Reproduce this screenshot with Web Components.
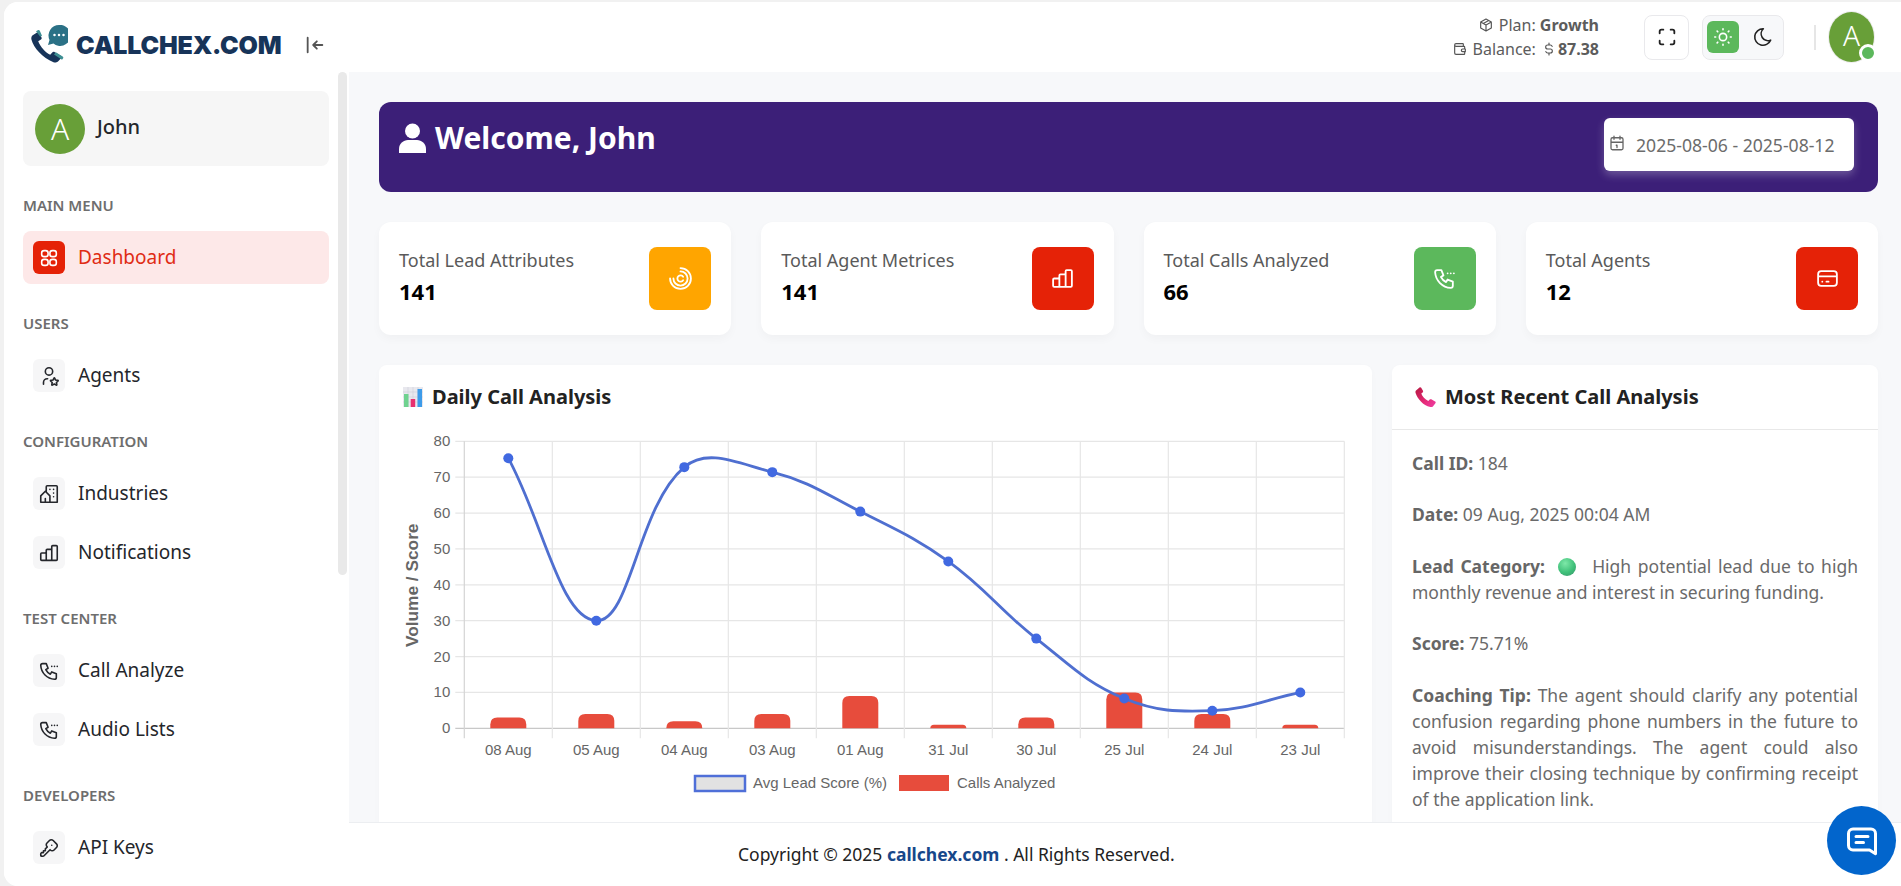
<!DOCTYPE html>
<html lang="en"><head><meta charset="utf-8"><title>Callchex Dashboard</title>
<style>
html,body{margin:0;height:886px;overflow:hidden;background:#f1f1f1}
body{font-family:"Noto Sans","Liberation Sans",sans-serif}
</style></head><body>
<cx-app></cx-app>
<script>
const ICONS={
collapse:'<path d="M10 12h10M10 12l4 4M10 12l4-4M4 4v16"/>',
grid:'<rect x="4" y="4" width="7" height="6.5" rx="2.600"/><rect x="13" y="4" width="7" height="6.5" rx="2.600"/><rect x="4" y="13.5" width="7" height="6.5" rx="2.600"/><rect x="13" y="13.5" width="7" height="6.5" rx="2.600"/>',
userstar:'<path d="M8 7a4 4 0 1 0 8 0a4 4 0 0 0-8 0M6 21v-2a4 4 0 0 1 4-4h.5M17.8 20.817l-2.172 1.138a.392.392 0 0 1-.568-.41l.415-2.411l-1.757-1.707a.389.389 0 0 1 .217-.665l2.428-.352l1.086-2.193a.392.392 0 0 1 .702 0l1.086 2.193l2.428.352a.39.39 0 0 1 .217.665l-1.757 1.707l.414 2.41a.39.39 0 0 1-.567.411z"/>',
building:'<path d="M8 9l5 5v7h-5v-4m0 4h-5v-7l5-5m1 1v-6a1 1 0 0 1 1-1h10a1 1 0 0 1 1 1v17h-8M13 7v.01M17 7v.01M17 11v.01M17 15v.01"/>',
bars:'<path d="M3 13a1 1 0 0 1 1-1h4a1 1 0 0 1 1 1v6a1 1 0 0 1-1 1h-4a1 1 0 0 1-1-1zM9 9a1 1 0 0 1 1-1h4a1 1 0 0 1 1 1v10a1 1 0 0 1-1 1h-4a1 1 0 0 1-1-1zM15 5a1 1 0 0 1 1-1h4a1 1 0 0 1 1 1v14a1 1 0 0 1-1 1h-4a1 1 0 0 1-1-1zM4 20h14"/>',
phonecall:'<path d="M5 4h4l2 5l-2.5 1.5a11 11 0 0 0 5 5l1.5-2.5l5 2v4a2 2 0 0 1-2 2a16 16 0 0 1-15-15a2 2 0 0 1 2-2M15 7v.01M18 7v.01M21 7v.01"/>',
key:'<path d="M16.555 3.843l3.602 3.602a2.877 2.877 0 0 1 0 4.069l-2.643 2.643a2.877 2.877 0 0 1-4.069 0l-.301-.301l-6.558 6.558a2 2 0 0 1-1.239.578l-.175.008h-1.172a1 1 0 0 1-.993-.883l-.007-.117v-1.172a2 2 0 0 1 .467-1.284l.119-.13l.414-.414h2v-2h2v-2l2.144-2.144l-.301-.301a2.877 2.877 0 0 1 0-4.069l2.643-2.643a2.877 2.877 0 0 1 4.069 0zM15 9h.01"/>',
box:'<path d="M12 3l8 4.5v9l-8 4.5l-8-4.5v-9l8-4.5M12 12l8-4.5M12 12v9M12 12l-8-4.5M16 5.25l-8 4.5"/>',
wallet:'<path d="M17 8v-3a1 1 0 0 0-1-1h-10a2 2 0 0 0 0 4h12a1 1 0 0 1 1 1v3m0 4v3a1 1 0 0 1-1 1h-12a2 2 0 0 1-2-2v-12M20 12v4h-4a2 2 0 0 1 0-4h4"/>',
dollar:'<path d="M16.7 8a3 3 0 0 0-2.7-2h-4a3 3 0 0 0 0 6h4a3 3 0 0 1 0 6h-4a3 3 0 0 1-2.7-2M12 3v3m0 12v3"/>',
max:'<path d="M4 8v-2a2 2 0 0 1 2-2h2M4 16v2a2 2 0 0 0 2 2h2M16 4h2a2 2 0 0 1 2 2v2M16 20h2a2 2 0 0 0 2-2v-2"/>',
sun:'<path d="M8 12a4 4 0 1 0 8 0a4 4 0 1 0-8 0M3 12h1m8-9v1m8 8h1m-9 8v1m-6.4-15.4l.7.7m12.1-.7l-.7.7m0 11.4l.7.7m-12.1-.7l-.7.7"/>',
moon:'<path d="M12 3c.132 0 .263 0 .393 0a7.5 7.5 0 0 0 7.92 12.446a9 9 0 1 1-8.313-12.454z"/>',
cal:'<path d="M4 7a2 2 0 0 1 2-2h12a2 2 0 0 1 2 2v12a2 2 0 0 1-2 2h-12a2 2 0 0 1-2-2zM16 3v4M8 3v4M4 11h16M11 15h1M12 15v3"/>',
spiral:'<path d="M2 12A10 10 0 1 0 12 2M5.200 12A6.800 6.800 0 1 0 12 5.200M14.500 10.300A3 3 0 1 0 14.500 13.700"/>',
card:'<path d="M3 8a3 3 0 0 1 3-3h12a3 3 0 0 1 3 3v8a3 3 0 0 1-3 3h-12a3 3 0 0 1-3-3zM3 10h18M7 15h.01M11 15h2"/>',
chat:'<path d="M8 9h8M8 13h5M6 4a3 3 0 0 0-3 3v8a3 3 0 0 0 3 3h11l4 2.500v-13.500a3 3 0 0 0-3-3z"/>'
};
const ico=(n,s=22,w=1.75,c='currentColor')=>`<svg width="${s}" height="${s}" viewBox="0 0 24 24" fill="none" stroke="${c}" stroke-width="${w}" stroke-linecap="round" stroke-linejoin="round" aria-hidden="true">${ICONS[n]}</svg>`;
const def=(name,css,html)=>customElements.define(name,class extends HTMLElement{
  constructor(){super();this.attachShadow({mode:'open'})}
  connectedCallback(){const r=this.shadowRoot;r.innerHTML=`<style>${css}</style>`+(typeof html==='function'?html(this):html)}
});

def('cx-avatar',`:host{display:flex;align-items:center;justify-content:center;flex:none;position:relative;background:#689f38;color:#fff;border-radius:50%;font-family:"Noto Sans",sans-serif;font-weight:300}
:host([online]){box-sizing:border-box;padding-bottom:5px}
.dot{position:absolute;right:-3px;bottom:0;width:12px;height:12px;border-radius:50%;background:#5cb85c;border:3px solid #fff}`,
 h=>`A${h.hasAttribute('online')?'<span class="dot"></span>':''}`);

def('cx-logo',`:host{display:flex;align-items:center;gap:8px;margin-top:17px}
span{font:900 25px/1 Inter,"Liberation Sans",sans-serif;color:#173459;letter-spacing:-.2px}
svg{display:block}`,
`<svg width="38" height="42" viewBox="0 0 38 42"><path d="M7.500 7.200l-4.800 3c-1.300 1-1.700 2.600-1.200 4.500 2 8 11 18 22 22.500 2 .6 3.600.2 5-1.200l2.800-3c.6-.7.4-1.600-.3-2.100l-6.500-3.900c-.8-.4-1.500-.3-2 .3l-2.300 2.500c-5-2.400-9.500-7.500-12-13.500l2.800-1.700c.7-.5.9-1.200.5-2l-2-4.400z" fill="#173459"/><path d="M6 6.300l1.800-1.100c.8-.4 1.600-.2 2 .6l2.200 4.900-1.800 1zM24 29.500l1.800-2.200 6.900 4.200c.7.500.9 1.400.3 2.100l-1 1.200z" fill="#3f8f93"/><path d="M29 0a10.500 10.500 0 0 0-9.500 15l-1.500 5 5.500-1.500A10.500 10.500 0 1 0 29 0z" fill="#2b7186"/><g fill="#fff"><circle cx="24.500" cy="10" r="1.250"/><circle cx="29" cy="10" r="1.250"/><circle cx="33.500" cy="10" r="1.250"/></g></svg><span>CALLCHEX.COM</span>`);

def('cx-header',`:host{display:flex;align-items:center;height:70px;background:#fff;padding:0 27px 0 26px;box-sizing:border-box;color:#5c5c5c;font-size:16px;position:relative}
.col{margin:16px 0 0 22px;color:#222;display:flex}
.sp{flex:1}
.info{display:flex;flex-direction:column;align-items:flex-end;line-height:24px;margin-right:45px}
.info div{display:flex;align-items:center;gap:5px;white-space:nowrap}
b{font-weight:700}
svg{display:block;color:#555}
.btn{width:45px;height:45px;box-sizing:border-box;border:1px solid #e9e9ec;border-radius:8px;display:flex;align-items:center;justify-content:center;color:#222;background:#fff}
.btn svg{color:#222}
.tog{display:flex;align-items:center;height:45px;width:82px;box-sizing:border-box;border:1px solid #e9e9ec;border-radius:8px;background:#f7f8fa;margin-left:13px;padding:0 4px;gap:8px}
.tog i{display:flex;width:32px;height:32px;border-radius:6px;align-items:center;justify-content:center}
.tog i.on{background:#5cb85c}
.tog i.on svg{color:#fff}.tog i svg{color:#222}
.div{width:2px;height:25px;background:#e6e6e6;margin:0 13px 0 30px}
cx-avatar{width:45px;height:50px;font-size:28px;box-shadow:0 0 0 1px #eee}`,
`<cx-logo></cx-logo><span class="col">${ico('collapse',22,2)}</span><span class="sp"></span>
<div class="info"><div>${ico('box',16)}<span>Plan: <b>Growth</b></span></div>
<div>${ico('wallet',16)}<span>Balance:</span>${ico('dollar',16)}<b style="margin-left:-4px">87.38</b></div></div>
<div class="btn">${ico('max',22,2)}</div>
<div class="tog"><i class="on">${ico('sun',22,1.75)}</i><i>${ico('moon',22,1.75)}</i></div>
<div class="div"></div><cx-avatar online></cx-avatar>`);

def('cx-nav-label',`:host{display:block;height:20px;line-height:20px;margin:29px 0 16px;font-size:15px;font-weight:600;color:#6e6e6e;white-space:nowrap}`,`<slot></slot>`);
def('cx-nav-item',`:host{display:flex;align-items:center;gap:13px;height:53px;box-sizing:border-box;padding:0 0 2px 10px;border-radius:8px;font-size:19px;color:#24262b;margin-bottom:6px}
:host([active]){background:#fde8e8;color:#e02c14}
i{display:flex;align-items:center;justify-content:center;width:32px;height:33px;margin-top:2px;border-radius:6px;background:#f6f6f7;color:#24262b}
:host([active]) i{background:#e52207;color:#fff}
svg{display:block}`,
h=>`<i>${ico(h.getAttribute('icon'),22,1.75)}</i><slot></slot>`);
def('cx-sidebar',`:host{display:block;width:345px;background:#fff;position:relative;padding:19px 20px 0 19px;box-sizing:border-box;overflow:hidden}
.u{display:flex;align-items:center;gap:12px;height:75px;padding-left:12px;background:#f6f6f6;border-radius:8px;font-size:20px;font-weight:500;color:#24262b}
.u span{margin-top:-4px}
cx-avatar{width:50px;height:50px;font-size:30px}
.thumb{position:absolute;left:334px;top:0;width:9px;height:503px;border-radius:5px;background:#e9e9e9}`,
`<div class="u"><cx-avatar></cx-avatar><span>John</span></div><div class="thumb"></div><slot></slot>`);

def('cx-welcome',`:host{display:flex;justify-content:space-between;height:90px;box-sizing:border-box;background:#3c1f78;border-radius:12px;padding:0 24px 0 20px;color:#fff}
h1{margin:0;padding-top:21px;font-size:30px;font-weight:700;display:flex;align-items:center;gap:9px;line-height:1;height:30px}
svg{display:block}
.d{display:flex;align-items:center;width:250px;height:53px;margin-top:16px;box-sizing:border-box;background:#fff;border-radius:6px;box-shadow:0 4px 8px rgba(255,255,255,.25);color:#6c6c6c;font-size:17.600px;padding-left:4px;gap:10px}
.d svg{margin-top:-4px;color:#666}`,
`<h1><svg width="27" height="30" viewBox="0 0 27 30" fill="#fff"><circle cx="13.500" cy="8" r="7.500"/><path d="M0 30v-4c0-5.500 4.500-9 9-9h9c4.500 0 9 3.500 9 9v4z"/></svg>Welcome, John</h1>
<div class="d">${ico('cal',18,1.75)}<span>2025-08-06 - 2025-08-12</span></div>`);

def('cx-stat',`:host{display:flex;align-items:center;justify-content:space-between;height:113px;box-sizing:border-box;background:#fff;border-radius:12px;box-shadow:0 4px 10px rgba(0,0,0,.03);padding:0 20px 0 20px}
.l{font-size:18px;color:#5a5a5a;line-height:24px;white-space:nowrap}
.n{font-size:22px;font-weight:700;color:#000;line-height:30px;margin-top:4px}
.t{margin-top:-3px}
i{display:flex;align-items:center;justify-content:center;width:62px;height:63px;border-radius:8px;color:#fff;background:var(--c)}
svg{display:block}`,
h=>`<div class="t"><div class="l">${h.getAttribute('label')}</div><div class="n">${h.getAttribute('value')}</div></div><i style="--c:${h.getAttribute('color')}">${ico(h.getAttribute('icon'),25,1.75)}</i>`);

def('cx-bar-emoji',`:host{display:block;flex:none}svg{display:block}`,
`<svg width="20" height="20" viewBox="0 0 20 20"><rect width="20" height="20" fill="#e8e8ee"/><path d="M0 5h20M0 10h20M0 15h20M5 0v20M10 0v20M15 0v20" stroke="#cfcfd8" stroke-width=".6"/><rect x="1" y="7" width="4.500" height="13" fill="#6fd28f"/><rect x="7.700" y="12" width="4.500" height="8" fill="#e8306f"/><rect x="14.500" y="2" width="4.500" height="18" fill="#3d9be9"/></svg>`);
def('cx-phone-emoji',`:host{display:block;flex:none}svg{display:block}`,
`<svg width="21" height="21" viewBox="0 0 21 21"><defs><linearGradient id="p" x1="0" y1="0" x2="1" y2="1"><stop offset="0" stop-color="#b5173f"/><stop offset=".6" stop-color="#e62b79"/><stop offset="1" stop-color="#ee3fa6"/></linearGradient></defs><path d="M1 3.500 4.500.5c.7-.5 1.300-.3 1.700.3l1.800 3c.3.600.2 1.100-.3 1.600L6.300 6.600c1 3 3.700 6 7 7.300l1.400-1.400c.5-.4 1-.5 1.600-.2l3.800 2.300c.7.400.8 1 .3 1.600l-2.300 3c-.7.900-1.700 1-2.800.8C8 18.300 2.500 12 .6 6 .3 5 .4 4.200 1 3.500z" fill="url(#p)"/></svg>`);
def('cx-orb',`:host{display:inline-block;width:18px;height:18px;border-radius:50%;vertical-align:-3px;margin:0 10px 0 6px;background:radial-gradient(circle at 40% 30%,#7ee8a8,#3fc079 55%,#3a8f6a)}`,``);

def('cx-panel',`:host{display:block;background:#fff;border-radius:8px;box-shadow:0 2px 8px rgba(0,0,0,.02);overflow:hidden}`,`<slot></slot>`);

def('cx-chart',`:host{display:block;height:520px}
.h{display:flex;align-items:center;gap:9px;height:63px;padding-left:24px;font-size:20px;font-weight:700;color:#222;box-sizing:border-box}
svg.c{display:block;font-family:"Liberation Sans",Arial,sans-serif}`,
h=>{
 const X0=85.3,CW=88,Y0=300.3,U=3.5875,FS=15;
 const labels=['08 Aug','05 Aug','04 Aug','03 Aug','01 Aug','31 Jul','30 Jul','25 Jul','24 Jul','23 Jul'];
 const vals=[75.3,30,72.8,71.4,60.4,46.5,25,8.3,4.9,10];
 const bars=[3,4,2,4,9,1,3,10,4,1];
 const px=i=>X0+CW*i+CW/2, py=v=>Y0-v*U;
 let s='';
 for(let v=0;v<=80;v+=10){const y=py(v);s+=`<line x1="${X0-9}" x2="${X0+880}" y1="${y}" y2="${y}" stroke="${v?'#e6e6e6':'#c8c8c8'}" stroke-width="1.200"/><text x="${X0-14}" y="${y+5}" text-anchor="end" font-size="${FS}" fill="#666">${v}</text>`}
 for(let i=0;i<=10;i++){const x=X0+CW*i;s+=`<line x1="${x}" x2="${x}" y1="${Y0-287}" y2="${Y0+10}" stroke="${i?'#e6e6e6':'#d4d4d4'}" stroke-width="1.200"/>`}
 labels.forEach((l,i)=>{s+=`<text x="${px(i)}" y="${Y0+27}" text-anchor="middle" font-size="${FS}" fill="#666">${l}</text>`});
 bars.forEach((b,i)=>{const x=px(i)-18,y=py(b),ht=Y0-y,r=Math.min(7,ht);s+=`<path d="M${x} ${Y0}V${y+r}Q${x} ${y} ${x+r} ${y}H${x+36-r}Q${x+36} ${y} ${x+36} ${y+r}V${Y0}z" fill="#e74c3c"/>`});
 const P=vals.map((v,i)=>[px(i),py(v)]);const T=.4;
 const cp=P.map((p,i)=>{const a=P[i-1]||p,b=P[i+1]||p;const d1=Math.hypot(p[0]-a[0],p[1]-a[1]),d2=Math.hypot(b[0]-p[0],b[1]-p[1]);const t=d1+d2||1,f1=T*d1/t,f2=T*d2/t;return{p:[p[0]-f1*(b[0]-a[0]),p[1]-f1*(b[1]-a[1])],n:[p[0]+f2*(b[0]-a[0]),p[1]+f2*(b[1]-a[1])]}});
 let d=`M${P[0][0]} ${P[0][1]}`;for(let i=1;i<P.length;i++){d+=`C${cp[i-1].n[0]} ${cp[i-1].n[1]} ${cp[i].p[0]} ${cp[i].p[1]} ${P[i][0]} ${P[i][1]}`}
 s+=`<path d="${d}" fill="none" stroke="#4f6fd0" stroke-width="2.800"/>`;
 P.forEach(p=>{s+=`<circle cx="${p[0]}" cy="${p[1]}" r="5" fill="#4169e1"/>`});
 s+=`<text transform="translate(39 ${Y0-143}) rotate(-90)" text-anchor="middle" font-size="17.300" font-weight="700" fill="#666">Volume / Score</text>`;
 s+=`<rect x="316" y="348" width="50" height="15" fill="#e2e2e2" stroke="#4f6fd8" stroke-width="2.500"/><text x="374" y="360" font-size="${FS}" fill="#666">Avg Lead Score (%)</text><rect x="520" y="347" width="50" height="16" fill="#e74c3c"/><text x="578" y="360" font-size="${FS}" fill="#666">Calls Analyzed</text>`;
 return `<div class="h"><cx-bar-emoji></cx-bar-emoji>Daily Call Analysis</div><svg class="c" width="993" height="457" viewBox="0 0 993 457">${s}</svg>`;
});

def('cx-recent',`:host{display:block;height:520px;color:#6a6a6a;font-size:17.500px;line-height:26px}
.h{display:flex;align-items:center;gap:9px;height:65px;box-sizing:border-box;padding-left:23px;border-bottom:1px solid #e8e8e8;font-size:20px;font-weight:700;color:#222}
.b{padding:20px 20px 0 20px}
p{margin:0 0 25.400px;text-align:justify}
b{font-weight:700;color:#666}`,
`<div class="h"><cx-phone-emoji></cx-phone-emoji>Most Recent Call Analysis</div><div class="b">
<p><b>Call ID:</b> 184</p>
<p><b>Date:</b> 09 Aug, 2025 00:04 AM</p>
<p><b>Lead Category:</b> <cx-orb></cx-orb> High potential lead due to high monthly revenue and interest in securing funding.</p>
<p><b>Score:</b> 75.71%</p>
<p><b>Coaching Tip:</b> The agent should clarify any potential confusion regarding phone numbers in the future to avoid misunderstandings. The agent could also improve their closing technique by confirming receipt of the application link.</p>
</div>`);

def('cx-footer',`:host{display:block;height:64px;box-sizing:border-box;background:#fff;border-top:1px solid #eceef1;font-size:17.500px;color:#222;padding:19px 0 0 389px;white-space:nowrap}
b{color:#17478a;font-weight:700}`,
`Copyright © 2025 <b>callchex.com</b> . All Rights Reserved.`);

def('cx-fab',`:host{position:absolute;right:5px;bottom:11px;width:69px;height:69px;border-radius:50%;background:#0265cc;color:#fff;display:flex;align-items:center;justify-content:center}svg{display:block}`,
()=>ico('chat',36,2));

def('cx-dashboard',`:host{display:flex;flex-direction:column;flex:1;min-width:0;height:814px;position:relative}
.s{flex:1;min-height:0;overflow:hidden;background:#f7f8fa;padding:30px 23px 0 30px;box-sizing:border-box}
.cards{display:grid;grid-template-columns:repeat(4,1fr);gap:30px;margin:30px 0}
.row{display:grid;grid-template-columns:993px 486px;gap:20px}`,
`<div class="s"><cx-welcome></cx-welcome>
<div class="cards">
<cx-stat label="Total Lead Attributes" value="141" icon="spiral" color="#ffa500"></cx-stat>
<cx-stat label="Total Agent Metrices" value="141" icon="bars" color="#e52207"></cx-stat>
<cx-stat label="Total Calls Analyzed" value="66" icon="phonecall" color="#5cb85c"></cx-stat>
<cx-stat label="Total Agents" value="12" icon="card" color="#e52207"></cx-stat>
</div>
<div class="row"><cx-panel><cx-chart></cx-chart></cx-panel><cx-panel><cx-recent></cx-recent></cx-panel></div>
</div><cx-footer></cx-footer><cx-fab></cx-fab>`);

def('cx-app',`:host{display:flex;flex-direction:column;height:884px;margin:2px 0 0 4px;background:#fff;border-radius:14px 0 0 14px;overflow:hidden;font-family:"Noto Sans","Liberation Sans",sans-serif}
.b{display:flex;flex:1;min-height:0}`,
`<cx-header></cx-header><div class="b"><cx-sidebar>
<cx-nav-label>MAIN MENU</cx-nav-label><cx-nav-item icon="grid" active>Dashboard</cx-nav-item>
<cx-nav-label>USERS</cx-nav-label><cx-nav-item icon="userstar">Agents</cx-nav-item>
<cx-nav-label>CONFIGURATION</cx-nav-label><cx-nav-item icon="building">Industries</cx-nav-item><cx-nav-item icon="bars">Notifications</cx-nav-item>
<cx-nav-label>TEST CENTER</cx-nav-label><cx-nav-item icon="phonecall">Call Analyze</cx-nav-item><cx-nav-item icon="phonecall">Audio Lists</cx-nav-item>
<cx-nav-label>DEVELOPERS</cx-nav-label><cx-nav-item icon="key">API Keys</cx-nav-item>
</cx-sidebar><cx-dashboard></cx-dashboard></div>`);
</script></body></html>
